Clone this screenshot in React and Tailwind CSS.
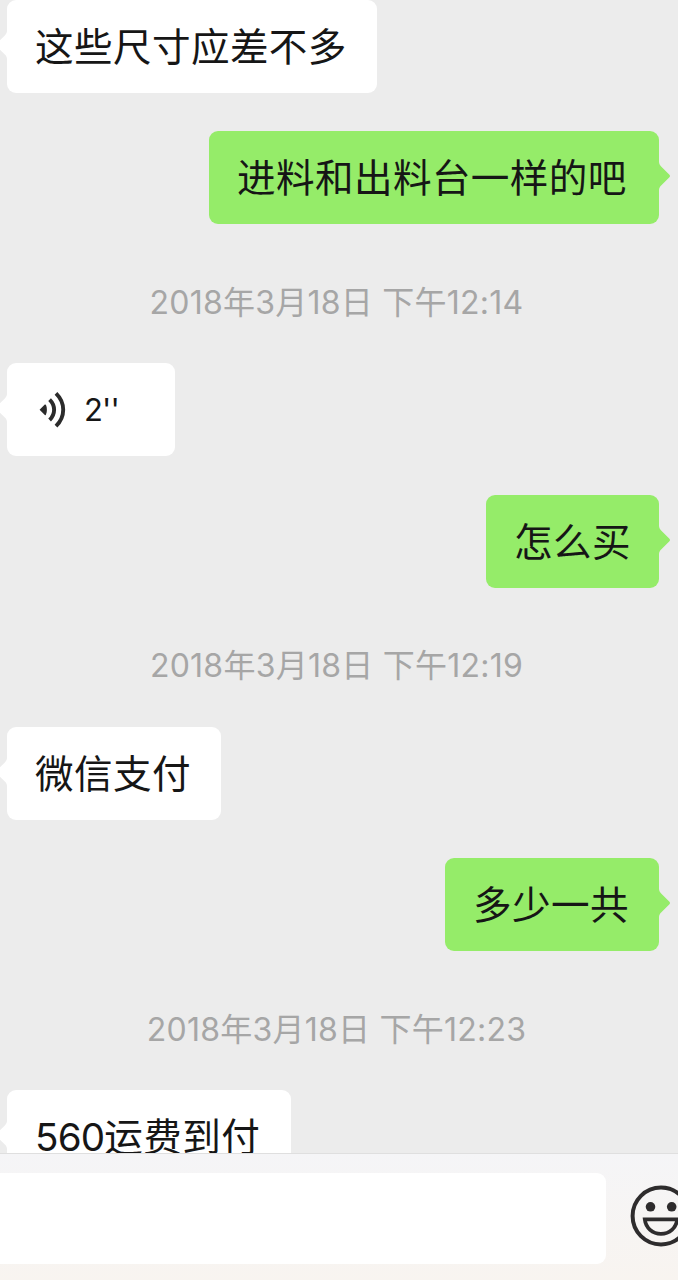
import React from 'react';
import clsx from 'clsx';

const MESSAGES = [
  { id: 1, type: 'text', from: 'them', text: '这些尺寸应差不多', width: 370 },
  { id: 2, type: 'text', from: 'me', text: '进料和出料台一样的吧', width: 450 },
  { id: 3, type: 'time', text: '2018年3月18日 下午12:14' },
  { id: 4, type: 'voice', from: 'them', text: "2''", width: 168 },
  { id: 5, type: 'text', from: 'me', text: '怎么买', width: 173 },
  { id: 6, type: 'time', text: '2018年3月18日 下午12:19' },
  { id: 7, type: 'text', from: 'them', text: '微信支付', width: 214 },
  { id: 8, type: 'text', from: 'me', text: '多少一共', width: 214 },
  { id: 9, type: 'time', text: '2018年3月18日 下午12:23' },
  { id: 10, type: 'text', from: 'them', amount: '560', text: '运费到付', width: 284 },
];

const VoiceIcon = () => (
  <svg className="w-7 h-9 shrink-0" viewBox="0 0 28 36" fill="none" stroke="#2b2b2b" strokeWidth="3.9">
    <path d="M0.6 17.8L5.8 12.6Q6.6 12 7 13C8.2 16 8.2 19.6 7 22.6Q6.6 23.6 5.8 23Z" fill="#2b2b2b" stroke="none" />
    <path d="M10.6 7.6C16.6 13.4 16.6 22.2 10.6 28" />
    <path d="M17 1.4C26.6 10.8 26.6 24.8 17 34.2" />
  </svg>
);

const SmileIcon = () => (
  <svg className="w-[62px] h-[62px] shrink-0" viewBox="0 0 62 62" fill="none" stroke="#2e2c2d" strokeWidth="4">
    <circle cx="31" cy="31" r="28.4" />
    <circle cx="20.5" cy="21.8" r="4.8" fill="#2e2c2d" stroke="none" />
    <circle cx="41.7" cy="21.8" r="4.8" fill="#2e2c2d" stroke="none" />
    <path d="M14.8 34.4H47.2C46.2 43 39.5 48.8 31 48.8S15.8 43 14.8 34.4Z" strokeWidth="3.8" />
  </svg>
);

// Small arrow on the outer edge of a bubble
const Tail = ({ mine }) => (
  <svg
    className={clsx(
      'absolute top-[31px] w-3 h-7',
      mine ? 'left-full -ml-px text-[#95ec69]' : 'right-full -mr-px -scale-x-100 text-white'
    )}
    viewBox="0 0 12 28"
    fill="currentColor"
  >
    <path d="M0 0H1C1.2 2 1.8 3.2 3.4 4.7L11.2 12.4Q12.8 14 11.2 15.6L3.4 23.3C1.8 24.8 1.2 26 1 28H0Z" />
  </svg>
);

const Bubble = ({ message }) => {
  const mine = message.from === 'me';

  return (
    <div className={clsx('flex shrink-0', mine ? 'justify-end pr-[19px]' : 'pl-[7px]')}>
      <div
        className={clsx(
          'relative flex items-center h-[93px] rounded-[9px] pl-7 text-[#161616] whitespace-nowrap',
          mine ? 'bg-[#95ec69]' : 'bg-white'
        )}
        style={{ width: message.width }}
      >
        <Tail mine={mine} />
        {message.type === 'voice' ? (
          <div className="flex items-center gap-[17px] pl-1">
            <VoiceIcon />
            <span className="text-[31px] leading-none tracking-[-0.8px]">{message.text}</span>
          </div>
        ) : (
          <span className="pt-0.5 text-[38.6px] leading-none tracking-[0.4px]">
            {message.amount && <span className="tracking-[-0.8px]">{message.amount}</span>}
            {message.text}
          </span>
        )}
      </div>
    </div>
  );
};

const TimeLabel = ({ message }) => (
  <div className="flex shrink-0 h-[62px] items-center justify-center pt-[18px] pr-[5px] text-[32px] leading-none tracking-[0.25px] text-[#a6a6a6] whitespace-nowrap">
    {message.text}
  </div>
);

const App = () => (
  <div className="flex flex-col w-full h-[1280px] overflow-hidden bg-[#ececec] font-[Inter,'Noto_Sans_CJK_SC',sans-serif]">
    {/* Conversation */}
    <div className="flex flex-col flex-1 min-h-0 gap-[38.5px] overflow-hidden -mt-[0.3px]">
      {MESSAGES.map((message) =>
        message.type === 'time' ? (
          <TimeLabel key={message.id} message={message} />
        ) : (
          <Bubble key={message.id} message={message} />
        )
      )}
    </div>

    {/* Input bar */}
    <div className="flex shrink-0 items-start h-[127px] pt-[19px] border-t border-[#dfdfdf] bg-linear-to-b from-[#f5f5f7] to-[#f8f4f0]">
      <div className="w-[606px] h-[91px] shrink-0 rounded-r-[9px] bg-white" />
      <div className="pl-6 pt-3">
        <SmileIcon />
      </div>
    </div>
  </div>
);

export default App;
